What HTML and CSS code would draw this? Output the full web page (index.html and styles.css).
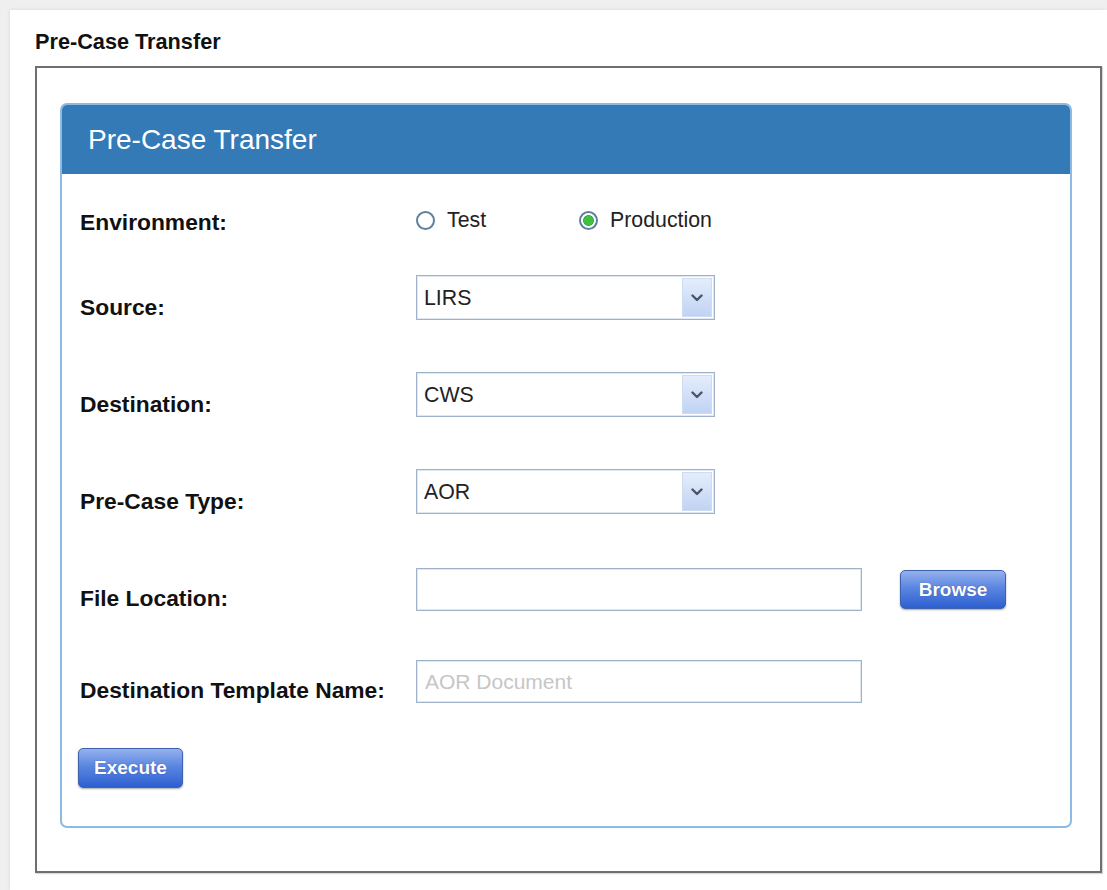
FILE: index.html
```html
<!DOCTYPE html>
<html lang="en">
<head>
<meta charset="utf-8">
<title>Pre-Case Transfer</title>
<link rel="stylesheet" href="styles.css">
</head>
<body>
<div class="sheet">
  <h1 class="page-title">Pre-Case Transfer</h1>
  <div class="frame">
    <section class="panel">
      <header class="panel-heading">Pre-Case Transfer</header>
      <div class="panel-body">
        <div class="form">
          <div class="field field-env">
            <span class="label">Environment:</span>
            <div class="radios">
              <label class="radio radio-test"><input type="radio" name="env" value="test"><span>Test</span></label>
              <label class="radio"><input type="radio" name="env" value="production" checked><span>Production</span></label>
            </div>
          </div>

          <div class="field">
            <label class="label" for="source">Source:</label>
            <div class="select">
              <select id="source"><option>LIRS</option></select>
              <span class="select-arrow"><svg width="12" height="8" viewBox="0 0 12 8"><path d="M1.5 1.5 L6 6 L10.5 1.5" fill="none" stroke="#4a5566" stroke-width="2.4" stroke-linecap="round" stroke-linejoin="round"/></svg></span>
            </div>
          </div>

          <div class="field">
            <label class="label" for="destination">Destination:</label>
            <div class="select">
              <select id="destination"><option>CWS</option></select>
              <span class="select-arrow"><svg width="12" height="8" viewBox="0 0 12 8"><path d="M1.5 1.5 L6 6 L10.5 1.5" fill="none" stroke="#4a5566" stroke-width="2.4" stroke-linecap="round" stroke-linejoin="round"/></svg></span>
            </div>
          </div>

          <div class="field">
            <label class="label" for="case-type">Pre-Case Type:</label>
            <div class="select">
              <select id="case-type"><option>AOR</option></select>
              <span class="select-arrow"><svg width="12" height="8" viewBox="0 0 12 8"><path d="M1.5 1.5 L6 6 L10.5 1.5" fill="none" stroke="#4a5566" stroke-width="2.4" stroke-linecap="round" stroke-linejoin="round"/></svg></span>
            </div>
          </div>

          <div class="field">
            <label class="label" for="file-location">File Location:</label>
            <div class="file-row">
              <input id="file-location" class="text-input" type="text">
              <button class="btn btn-browse" type="button">Browse</button>
            </div>
          </div>

          <div class="field field-template">
            <label class="label" for="template-name">Destination Template Name:</label>
            <input id="template-name" class="text-input" type="text" placeholder="AOR Document">
          </div>
        </div>

        <div class="actions">
          <button class="btn btn-execute" type="button">Execute</button>
        </div>
      </div>
    </section>
  </div>
</div>
</body>
</html>
```

FILE: styles.css
```css
html, body {
  margin: 0;
  padding: 0;
}

body {
  background: #efefef;
  font-family: "Liberation Sans", Arial, sans-serif;
  color: #111;
}

.sheet {
  margin: 10px 0 0 10px;
  padding: 20px 5px 19px 25px;
  background: #fff;
  box-shadow: -1px -1px 3px rgba(0, 0, 0, 0.06);
}

.page-title {
  margin: 0 0 12px;
  font-size: 21.7px;
  line-height: 24px;
  font-weight: bold;
  color: #111;
}

.frame {
  border: 2px solid #6f6f6f;
  padding: 35px 28px 43px 23px;
  box-shadow: 1px 1px 1px rgba(0, 0, 0, 0.15);
}

.panel {
  border: 2px solid #8dbae3;
  border-radius: 7px;
  overflow: hidden;
}

.panel-heading {
  background: #337ab7;
  color: #fff;
  height: 69px;
  line-height: 69px;
  padding-left: 26px;
  font-size: 28px;
}

.panel-body {
  padding: 26px 18px 38px 16px;
}

.form {
  display: flex;
  flex-direction: column;
  gap: 52px;
  padding-left: 2px;
}

.field {
  display: grid;
  grid-template-columns: 336px auto;
  justify-content: start;
  align-items: end;
  min-height: 45px;
}

.field-env {
  min-height: 35px;
  margin-bottom: -12px;
}

.field-template {
  margin-top: -5px;
}

.label {
  font-size: 22.8px;
  line-height: 26px;
  font-weight: bold;
  color: #111;
}

.radios {
  display: flex;
  align-items: center;
  height: 30px;
  gap: 93px;
}

.radio {
  display: flex;
  align-items: center;
  gap: 12px;
  font-size: 21.3px;
  color: #222;
}

.radio input {
  appearance: none;
  -webkit-appearance: none;
  margin: 0;
  width: 19px;
  height: 19px;
  border-radius: 50%;
  border: 2px solid #5f7f9c;
  background: #fff;
  box-sizing: border-box;
}

.radio input:checked {
  background: radial-gradient(circle, #3fc03f 0 4.5px, #2fa82f 5px, #fff 5.8px);
}

.select {
  position: relative;
  width: 299px;
  height: 45px;
}

.select select {
  appearance: none;
  -webkit-appearance: none;
  width: 100%;
  height: 100%;
  margin: 0;
  box-sizing: border-box;
  border: 1px solid #9fb2ca;
  box-shadow: inset 0 0 0 1px #dfe7f1;
  border-radius: 0;
  background: #fff;
  padding: 0 40px 0 7px;
  font-family: "Liberation Sans", Arial, sans-serif;
  font-size: 21.3px;
  color: #222;
}

.select-arrow {
  position: absolute;
  top: 3px;
  right: 3px;
  bottom: 3px;
  width: 30px;
  display: flex;
  align-items: center;
  justify-content: center;
  background: linear-gradient(#e4edfc, #c0d3f4);
  border: 1px solid #cfdcf0;
  box-sizing: border-box;
  pointer-events: none;
}

.file-row {
  display: flex;
  align-items: center;
  gap: 38px;
}

.text-input {
  width: 446px;
  height: 43px;
  margin: 0;
  box-sizing: border-box;
  border: 1px solid #9fb2ca;
  box-shadow: inset 0 0 0 1px #dfe7f1;
  border-radius: 0;
  padding: 0 8px;
  font-family: "Liberation Sans", Arial, sans-serif;
  font-size: 21px;
  color: #222;
  background: #fff;
}

.text-input::placeholder {
  color: #c6c6c6;
}

.btn {
  height: 39px;
  padding: 0;
  border: 1px solid #3f62ad;
  border-radius: 5px;
  background: linear-gradient(#95b1ee, #5b86e0 45%, #2d5fd0);
  color: #fff;
  font-family: "Liberation Sans", Arial, sans-serif;
  font-weight: bold;
  font-size: 19px;
  text-shadow: 0 0 1px rgba(20, 40, 110, 0.6);
  box-shadow: 0 1px 2px rgba(0, 0, 0, 0.35);
  cursor: pointer;
}

.btn-browse {
  width: 106px;
}

.actions {
  margin-top: 45px;
}

.btn-execute {
  width: 105px;
  height: 40px;
}
```
